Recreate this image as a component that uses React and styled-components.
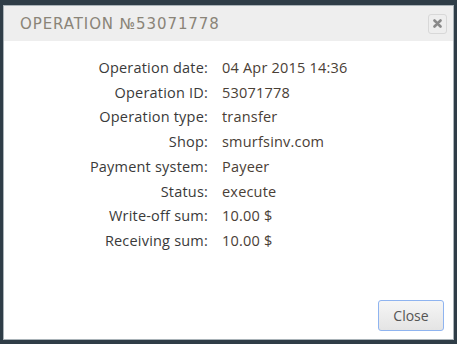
import styled, { createGlobalStyle } from "styled-components";

const GlobalStyle = createGlobalStyle`
  html, body {
    margin: 0;
    padding: 0;
    background: #2f3d47;
  }
  body {
    font-family: "Open Sans", "Liberation Sans", sans-serif;
  }
`;

const rows = [
  ["Operation date:", "04 Apr 2015 14:36"],
  ["Operation ID:", "53071778"],
  ["Operation type:", "transfer"],
  ["Shop:", "smurfsinv.com"],
  ["Payment system:", "Payeer"],
  ["Status:", "execute"],
  ["Write-off sum:", "10.00 $"],
  ["Receiving sum:", "10.00 $"],
];

export default function App() {
  return (
    <>
      <GlobalStyle />
      <Page>
        <Modal>
          <Header>
            <Title>OPERATION №53071778</Title>
            <CloseX aria-label="close">
              <svg width="9" height="9" viewBox="0 0 9 9">
                <path
                  d="M1.5 1.5 L7.5 7.5 M7.5 1.5 L1.5 7.5"
                  stroke="#8a8a8a"
                  strokeWidth="2.6"
                  strokeLinecap="round"
                />
              </svg>
            </CloseX>
          </Header>
          <Body>
            <Details>
              {rows.map(([label, value]) => (
                <Row key={label}>
                  <Label>{label}</Label>
                  <Value>{value}</Value>
                </Row>
              ))}
            </Details>
          </Body>
          <Footer>
            <Button>Close</Button>
          </Footer>
        </Modal>
      </Page>
    </>
  );
}

const Page = styled.div`
  width: 457px;
  height: 344px;
  padding: 5px 3px 4px 3px;
  box-sizing: border-box;
`;

const Modal = styled.div`
  width: 451px;
  height: 335px;
  box-sizing: border-box;
  background: #fff;
  border: 1px solid #aab3b8;
  display: flex;
  flex-direction: column;
`;

const Header = styled.div`
  height: 35px;
  background: #eeeeee;
  display: flex;
  align-items: center;
  justify-content: space-between;
  padding: 0 6px 0 16px;
  flex-shrink: 0;
`;

const Title = styled.h3`
  margin: 0;
  font-family: "DejaVu Sans", sans-serif;
  font-weight: normal;
  font-size: 15px;
  letter-spacing: 0.9px;
  color: #8a8478;
`;

const CloseX = styled.button`
  width: 19px;
  height: 20px;
  padding: 0;
  border: 1px solid #d8d8d8;
  border-radius: 3px;
  background: #eeeeee;
  display: flex;
  align-items: center;
  justify-content: center;
`;

const Body = styled.div`
  flex: 1;
  padding-top: 15px;
`;

const Details = styled.div`
  display: grid;
  grid-template-columns: 204px auto;
  column-gap: 14px;
`;

const Row = styled.div`
  display: contents;
`;

const Label = styled.div`
  text-align: right;
  font-size: 14.5px;
  letter-spacing: 0.2px;
  line-height: 24.7px;
  color: #3a3a3a;
`;

const Value = styled.div`
  font-size: 14.5px;
  letter-spacing: 0.2px;
  line-height: 24.7px;
  color: #4a4036;
`;

const Footer = styled.div`
  display: flex;
  justify-content: flex-end;
  padding: 0 9px 8px 0;
`;

const Button = styled.button`
  width: 66px;
  height: 31px;
  border: 1px solid #8fb4f0;
  border-radius: 3px;
  background: linear-gradient(#f6f6f6, #e4e4e4);
  color: #555;
  font-family: "Open Sans", "Liberation Sans", sans-serif;
  font-size: 14px;
`;
